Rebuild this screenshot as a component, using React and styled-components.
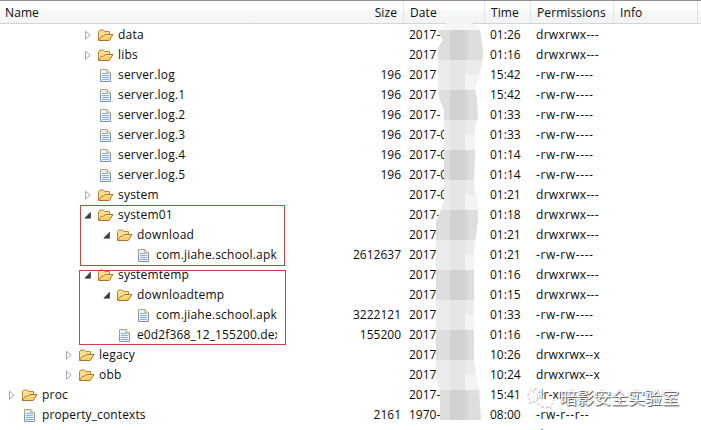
import React from 'react';
import styled, { createGlobalStyle } from 'styled-components';

const Global = createGlobalStyle`
  html, body { margin: 0; padding: 0; background: #fff; overflow: hidden; }
`;

const Explorer = styled.main`
  position: relative;
  width: 701px;
  height: 430px;
  overflow: hidden;
  background: #fff;
  color: #0c0c0c;
  font: 12px/20px 'Open Sans', 'Noto Sans', sans-serif;
  white-space: pre;
`;

const Header = styled.header`
  display: grid;
  grid-template-columns: 404px 81px 46px 83px 84px 1fr;
  box-sizing: border-box;
  height: 24px;
  border-top: 1px solid #8f8f8f;
  border-bottom: 1px solid #d5d5d5;
  background: linear-gradient(#fff 0, #fff 40%, #f7f8f9 44%, #f2f3f4 100%);
`;

const HeaderCell = styled.div`
  display: flex;
  justify-content: space-between;
  box-sizing: border-box;
  border-right: 1px solid #e2e3e5;
  padding: 2px 6px 0 ${p => p.$inset ?? 6}px;
  letter-spacing: 0.1px;
`;

const Rows = styled.div`
  padding-top: 1px;
`;

const Row = styled.div`
  display: grid;
  grid-template-columns: 277px 124px 83px 46px 1fr;
  height: 20px;
`;

const NameCell = styled.div`
  display: flex;
  align-items: center;
  overflow: hidden;
  padding-left: ${p => p.$depth * 19 + 4}px;
`;

const Label = styled.span`
  margin-left: 4px;
  letter-spacing: ${p => p.$track}px;
`;

const SizeCell = styled.div`
  text-align: right;
`;

const Cell = styled.div`
  padding-left: ${p => p.$inset}px;
  letter-spacing: ${p => p.$track ?? 0}px;
`;

const Glyph = styled.svg`
  flex: none;
  display: block;
`;

const Overlay = styled.svg`
  position: absolute;
  inset: 0;
  pointer-events: none;
`;

const Highlight = styled.div`
  position: absolute;
  box-sizing: border-box;
  left: ${p => p.$left}px;
  top: ${p => p.$top}px;
  width: ${p => p.$right - p.$left}px;
  height: ${p => p.$height}px;
  border: 1px solid #cf4046;
`;

const Watermark = styled.div`
  position: absolute;
  left: 526px;
  top: 385px;
  display: flex;
  align-items: center;
  color: #fff;
  font: 17px/24px 'Noto Sans CJK SC', sans-serif;
  text-shadow: 1px 1px 0 #666, 0 1px 1px #999, -0.5px -0.5px 0 #ccc;
`;

function Arrow({ state }) {
  return (
    <Glyph width="16" height="20" viewBox="0 0 16 20">
      {state === 'closed' && <path d="M5.5 6.2v8l4.6-4z" fill="#fff" stroke="#a5a5a5" />}
      {state === 'open' && <path d="M10.5 7.2v6H4.8z" fill="#404040" stroke="#2c2c2c" strokeWidth=".6" />}
    </Glyph>
  );
}

function FolderIcon() {
  return (
    <Glyph width="18" height="20" viewBox="0 0 18 20">
      <path d="M2.5 15V6.5l1.4-1.5h3.4L8.7 6.5h4.8v3.5" fill="#ffdf8c" stroke="#b8853a" />
      <path d="M2.5 15.5 5.6 11.3l2.6-.2 1.4-1.6h7.4l-3.8 6z" fill="#ffd06a" stroke="#aa7429" strokeLinejoin="round" />
      <path d="m4.5 14.2 1.9-1.9 2.4-.2 1.2-1.4h4.8" fill="none" stroke="#ffe9a6" />
    </Glyph>
  );
}

function FileIcon() {
  return (
    <Glyph width="18" height="20" viewBox="0 0 18 20">
      <path d="M4.5 4.5H11l3.500 3.500v8.500h-10z" fill="#eaf1ff" />
      <path d="M4.5 12v-7.500H11l3.500 3.500" fill="none" stroke="#aaa579" />
      <path d="M14.500 8v8.500h-10V10" fill="none" stroke="#7e93b6" />
      <path d="M11 4.500v3.500h3.500" fill="#f1e5b0" stroke="#b5a970" />
      <path d="M6 8.500h5M6 10.500h7M6 12.500h7M6 14.500h7" stroke="#8fafe2" />
    </Glyph>
  );
}

const entries = [
  ['data', 4, 'closed', '', '2017-', '01:26', 'drwxrwx---'],
  ['libs', 4, 'closed', '', '2017', '01:16', 'drwxrwx---'],
  ['server.log', 4, '', '196', '2017', '15:42', '-rw-rw----'],
  ['server.log.1', 4, '', '196', '2017', '15:42', '-rw-rw----'],
  ['server.log.2', 4, '', '196', '2017-', '01:33', '-rw-rw----'],
  ['server.log.3', 4, '', '196', '2017-0', '01:33', '-rw-rw----'],
  ['server.log.4', 4, '', '196', '2017-0', '01:14', '-rw-rw----'],
  ['server.log.5', 4, '', '196', '2017-0', '01:14', '-rw-rw----'],
  ['system', 4, 'closed', '', '2017-0', '01:21', 'drwxrwx---'],
  ['system01', 4, 'open', '', '2017-', '01:18', 'drwxrwx---'],
  ['download', 5, 'open', '', '2017', '01:21', 'drwxrwx---'],
  ['com.jiahe.school.apk', 6, '', '2612637', '2017', '01:21', '-rw-rw----'],
  ['systemtemp', 4, 'open', '', '2017', '01:16', 'drwxrwx---'],
  ['downloadtemp', 5, 'open', '', '2017', '01:15', 'drwxrwx---'],
  ['com.jiahe.school.apk', 6, '', '3222121', '2017', '01:33', '-rw-rw----'],
  ['e0d2f368_12_155200.dex', 5, '', '155200', '2017', '01:16', '-rw-rw----'],
  ['legacy', 3, 'closed', '', '2017', '10:26', 'drwxrwx--x'],
  ['obb', 3, 'closed', '', '2017', '10:24', 'drwxrwx--x'],
  ['proc', 0, 'closed', '', '2017-', '15:41', 'dr-xr'],
  ['property_contexts', 0, '', '2161', '1970-', '08:00', '-rw-r--r--'],
  ['', 0, 'none', '', '', '', 'd'],
];

const nameTracking = name => (name.includes('_') ? 0.12 : 0.2);

const permissionTracking = value => {
  if (value.startsWith('-')) return 0.6;
  return value.endsWith('---') ? 0.3 : 0.15;
};

const darkBands = [30, 90, 150, 210, 270, 330, 390];

function Mosaic() {
  return (
    <Overlay width="701" height="430" viewBox="0 0 701 430">
      <defs>
        <clipPath id="smudge">
          <path d="M447 23H472L480 30L483 50L482 66L479 76L475 88L477 100L478 118L475 126V150L474 180L475 193L477 195L478 220L474 250V360L477 380L479 390L481 420H440V390L436 380V222L441 210L444 200V110L440 100L438 90V48L443 40L438 32z" />
        </clipPath>
      </defs>
      <g clipPath="url(#smudge)">
        <path fill="#ececec" d="M430 22h60v400h-60z" />
        <path fill="#e5e5e5" d="M450 30h15v390h-15z" />
        <path fill="#f6f6f6" d="M430 22h60v8h-60z" />
        {darkBands.map(y => (
          <g key={y}>
            <path fill="#dedede" d={`M430 ${y}h60v30h-60z`} />
            <path fill="#d1d1d1" d={`M450 ${y}h15v30h-15z`} />
            <path fill="#d8d8d8" d={`M465 ${y}h4v30h-4z`} />
            <path fill="#f4f4f4" d={`M465 ${y + 45}h20v15h-20z`} />
          </g>
        ))}
      </g>
    </Overlay>
  );
}

export default function App() {
  return (
    <>
      <Global />
      <Explorer>
        <Header>
          <HeaderCell $inset={5}><span>Name</span><span>Size</span></HeaderCell>
          <HeaderCell>Date</HeaderCell>
          <HeaderCell>Time</HeaderCell>
          <HeaderCell>Permissions</HeaderCell>
          <HeaderCell>Info</HeaderCell>
        </Header>
        <Rows>
          {entries.map(([name, depth, state, size, date, time, permissions], i) => (
            <Row key={i}>
              <NameCell $depth={depth}>
                <Arrow state={state} />
                {state === '' ? <FileIcon /> : state !== 'none' && <FolderIcon />}
                <Label $track={nameTracking(name)}>{name}</Label>
              </NameCell>
              <SizeCell>{size}</SizeCell>
              <Cell $inset={8}>{date}</Cell>
              <Cell $inset={6}>{time}</Cell>
              <Cell $inset={6} $track={permissionTracking(permissions)}>{permissions}</Cell>
            </Row>
          ))}
        </Rows>
        <Mosaic />
        <Highlight $left={80} $top={205} $right={285} $height={61} />
        <Highlight $left={79} $top={270} $right={286} $height={75} />
        <Watermark>
          <Glyph width="34" height="24" viewBox="0 0 34 24">
            <path d="M7 4h9v12H7z" fill="#fff" opacity=".8" />
            <g fill="none" stroke="#a0a0a0" strokeWidth=".8" strokeDasharray="3 2">
              <path d="M11 4C5 4 2 7 2 11c0 3 2 4 3 5l-1 3 3-2h4" />
              <path d="M20 9c-5 0-9 3-9 7 0 5 5 7 11 6l3 2-1-3c3-2 4-4 4-6" />
            </g>
            <path d="M7 7h1M13 7h1" stroke="#777" />
          </Glyph>
          <span>暗影安全实验室</span>
        </Watermark>
      </Explorer>
    </>
  );
}
